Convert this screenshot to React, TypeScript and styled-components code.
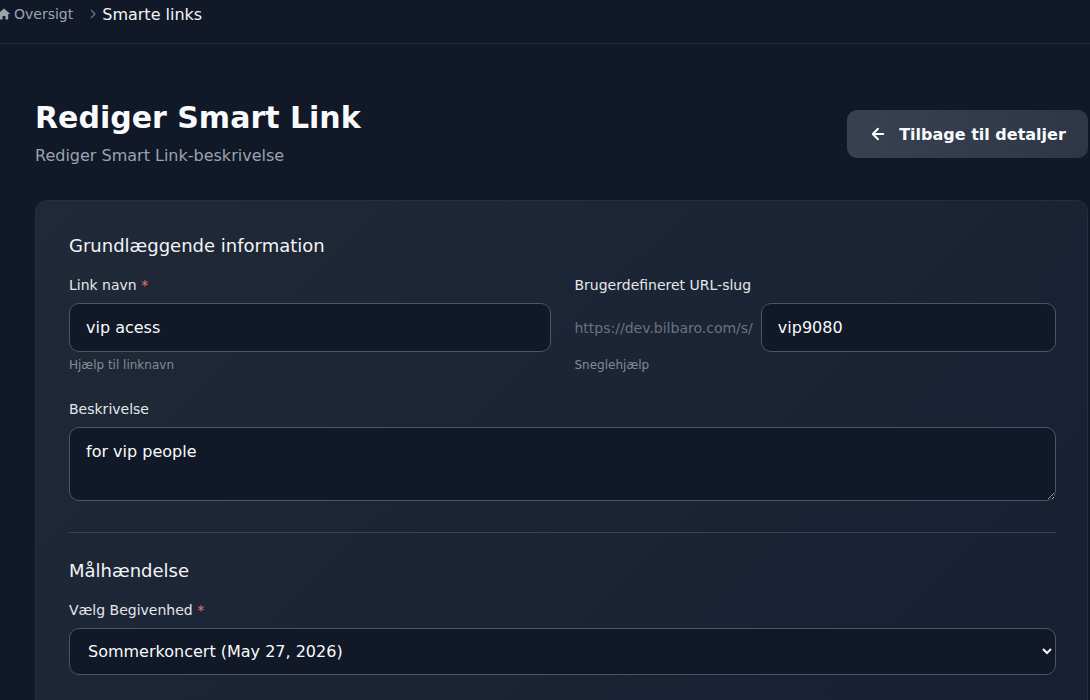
import React from "react";
import styled, { createGlobalStyle } from "styled-components";

const Global = createGlobalStyle`
  html, body { margin: 0; background: #111827; }
  body { font-family: "DejaVu Sans", "Noto Sans", sans-serif; color: #f9fafb; }
  * { box-sizing: border-box; }
`;

const TopBar = styled.div`
  height: 44px; border-bottom: 1px solid #1f2937;
  display: flex; align-items: center; gap: 14px; margin-left: -3px;
  padding-bottom: 15px;
`;
const Crumb = styled.span<{ $active?: boolean }>`
  display: flex; align-items: center; gap: 3px;
  font-size: ${p => (p.$active ? "16px" : "14px")};
  color: ${p => (p.$active ? "#f3f4f6" : "#9ca3af")};
`;
const Main = styled.div`padding: 56px 2px 0 35px;`;
const Header = styled.div`display: flex; justify-content: space-between; align-items: flex-start;`;
const Title = styled.h1`margin: 0; font-size: 30px; font-weight: 700; line-height: 36px; color: #f9fafb;`;
const Sub = styled.p`margin: 10px 0 0; font-size: 16px; color: #9ca3af;`;
const BackBtn = styled.button`
  margin-top: 10px; height: 48px; width: 241px; border: none; border-radius: 10px;
  background: linear-gradient(90deg, #374151, #2d3748); color: #f9fafb;
  font: 700 16px "DejaVu Sans", sans-serif; display: flex; align-items: center; justify-content: center; gap: 12px;
`;
const Card = styled.div`
  margin-top: 35px; border-radius: 12px; padding: 33px 31px 40px 33px;
  background: linear-gradient(135deg, #1f2937, #172033); border: 1px solid #243042;
`;
const SectionTitle = styled.h2`margin: 0 0 18px; font-size: 18px; font-weight: 400; color: #f3f4f6; line-height: 24px;`;
const Grid = styled.div`display: grid; grid-template-columns: 1fr 1fr; gap: 24px;`;
const Field = styled.div<{ $mb?: number }>`display: flex; flex-direction: column; margin-bottom: ${p => p.$mb ?? 22}px;`;
const Label = styled.label`font-size: 14px; color: #e5e7eb; margin-bottom: 9px; line-height: 18px;`;
const Req = styled.span`color: #f87171;`;
const inputCss = `
  background: #111827; border: 1px solid #4b5563; border-radius: 10px; color: #f9fafb;
  font: 16px "DejaVu Sans", sans-serif; padding: 0 16px; width: 100%;
`;
const Input = styled.input`${inputCss} height: 49px;`;
const Textarea = styled.textarea`${inputCss} height: 74px; padding: 14px 16px; resize: vertical;`;
const Select = styled.select`${inputCss} height: 47px; padding: 0 14px; appearance: auto;`;
const Help = styled.span`font-size: 12px; color: #9ca3af; opacity: .8; margin-top: 6px;`;
const SlugRow = styled.div`display: flex; align-items: center; gap: 8px;`;
const Prefix = styled.span`font-size: 14px; color: #6b7280; white-space: nowrap;`;
const Divider = styled.hr`border: none; border-top: 1px solid #374151; margin: 10px 0 26px;`;

export default function App() {
  return (
    <>
      <Global />
      <TopBar>
        <Crumb>
          <svg width="14" height="14" viewBox="0 0 20 20" fill="#9ca3af"><path d="M10 2 1 10h3v8h4v-5h4v5h4v-8h3z"/></svg>
          Oversigt
        </Crumb>
        <Crumb $active>
          <svg width="12" height="14" viewBox="0 0 12 14" fill="none" stroke="#6b7280" strokeWidth="1.3"><path d="M4 3l4 4-4 4"/></svg>
          Smarte links
        </Crumb>
      </TopBar>
      <Main>
        <Header>
          <div>
            <Title>Rediger Smart Link</Title>
            <Sub>Rediger Smart Link-beskrivelse</Sub>
          </div>
          <BackBtn>
            <svg width="18" height="18" viewBox="0 0 24 24" fill="none" stroke="#fff" strokeWidth="2.5" strokeLinecap="round" strokeLinejoin="round"><path d="M19 12H5M12 19l-7-7 7-7"/></svg>
            Tilbage til detaljer
          </BackBtn>
        </Header>
        <Card>
          <SectionTitle>Grundlæggende information</SectionTitle>
          <Grid>
            <Field $mb={28}>
              <Label>Link navn <Req>*</Req></Label>
              <Input defaultValue="vip acess" />
              <Help>Hjælp til linknavn</Help>
            </Field>
            <Field $mb={28}>
              <Label>Brugerdefineret URL-slug</Label>
              <SlugRow>
                <Prefix>https://dev.bilbaro.com/s/</Prefix>
                <Input defaultValue="vip9080" />
              </SlugRow>
              <Help>Sneglehjælp</Help>
            </Field>
          </Grid>
          <Field $mb={31}>
            <Label>Beskrivelse</Label>
            <Textarea defaultValue="for vip people" />
          </Field>
          <Divider />
          <SectionTitle>Målhændelse</SectionTitle>
          <Field>
            <Label>Vælg Begivenhed <Req>*</Req></Label>
            <Select defaultValue="a"><option value="a">Sommerkoncert (May 27, 2026)</option></Select>
          </Field>
        </Card>
      </Main>
    </>
  );
}
